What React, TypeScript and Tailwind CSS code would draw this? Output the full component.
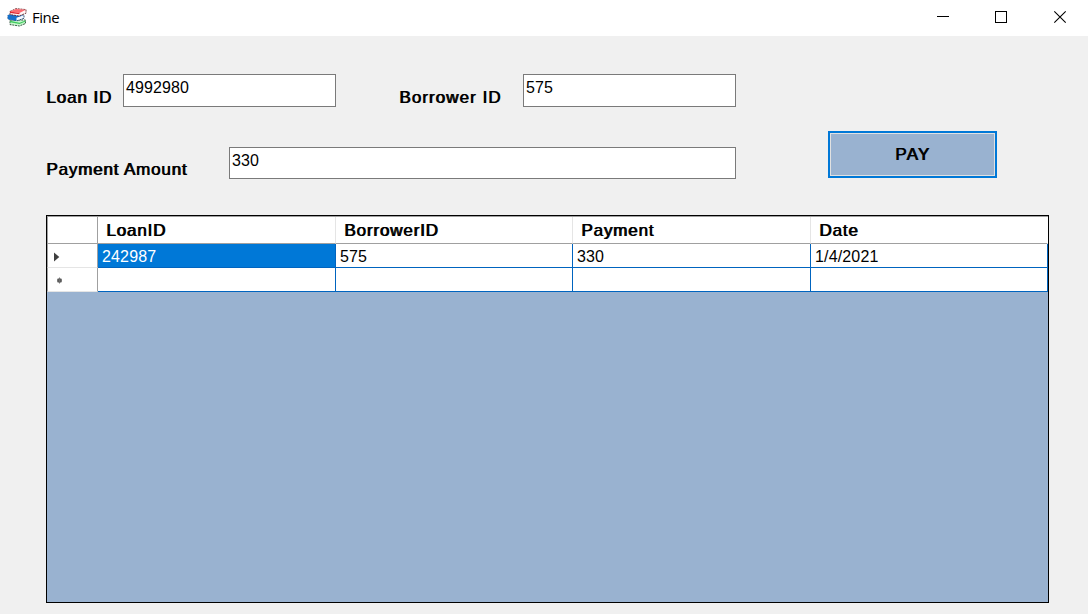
import type { ReactNode } from "react";

const strong = "text-[17px] [text-shadow:0.9px_0_0_#000] whitespace-nowrap";

function BooksIcon() {
  return (
    <svg width="20" height="19" viewBox="0 0 20 19" className="block shrink-0">
      <path d="M3 12 H18.5 V15.5 L12.5 18 L3 16.6Z" fill="#c9f7cf" stroke="#123b22" strokeWidth="0.8" strokeDasharray="2 0.8" />
      <path d="M3 12.8 L12.5 14.8 L18.5 12.5 V13.5 L12.5 16 L3 14.2Z" fill="#3fcb5c" />
      <path d="M1 7.5 L5 6 L17 7 V10.3 L10 12.8 L1 11Z" fill="#f2f9ff" stroke="#0d335c" strokeWidth="0.8" strokeDasharray="2 0.8" />
      <path d="M0.6 7.3 L5 6 L16 7.5 L9.5 9.8 V12.8 L1 11.2Z" fill="#1470cc" />
      <path d="M3 3.5 L9 0.6 L19 1.6 V5.2 L12 8 L3 6.5Z" fill="#fff7f6" stroke="#5a1418" strokeWidth="0.8" strokeDasharray="2 0.8" />
      <path d="M3 3.5 L9 0.9 L18.8 1.8 L12.5 5Z" fill="#fb6a70" />
      <path d="M3 3.5 L12.5 5 V6.3 L3 5Z" fill="#de2630" />
    </svg>
  );
}

function TextBox({ value, className }: { value: string; className: string }) {
  return (
    <div className={`shrink-0 border border-[#7a7a7a] bg-white pl-[2px] pt-[4px] text-[16px] leading-[18px] tracking-[0.1px] ${className}`}>
      {value}
    </div>
  );
}

function HeaderCell({ children, last }: { children: ReactNode; last?: boolean }) {
  return (
    <div className={`border-r border-b border-b-[#a0a0a0] pl-[8px] pt-[5px] leading-[18px] ${last ? "border-r-white" : "border-r-[#e5e5e5]"} ${strong}`}>
      {children}
    </div>
  );
}

function Cell({ children, selected }: { children?: ReactNode; selected?: boolean }) {
  return (
    <div className={`border-r border-b border-[#0064bf] pl-[4px] pt-[4px] leading-[18px] tracking-[0.15px] ${selected ? "bg-[#0078d7] text-white" : "bg-white"}`}>
      {children}
    </div>
  );
}

export default function App() {
  return (
    <div className="flex h-[614px] w-[1088px] flex-col overflow-hidden bg-[#f0f0f0] font-['Liberation_Sans',sans-serif] text-[16px] text-black">
      <header className="flex h-[36px] shrink-0 items-center bg-white pl-[7px]">
        <div className="flex items-center pb-[2px]">
          <BooksIcon />
          <span className="ml-[5px] font-['Open_Sans',sans-serif] text-[15px] leading-[20px] tracking-[-0.5px]">Fine</span>
        </div>
        <div className="ml-auto flex">
          <svg width="151" height="36" viewBox="0 0 151 36" fill="none" stroke="#000" strokeWidth="1">
            <path d="M0 16.5H12" shapeRendering="crispEdges" />
            <rect x="58.5" y="11.5" width="11" height="11" shapeRendering="crispEdges" />
            <path d="M117.3 11.3L128.7 22.7M128.7 11.3L117.3 22.7" strokeWidth="1.1" />
          </svg>
        </div>
      </header>

      <main className="flex flex-1 flex-col pl-[46px]">
        <section className="flex h-[179px] shrink-0">
          <div className="flex w-[690px] flex-col pt-[38px]">
            <div className="flex h-[73px] items-start">
              <label className={`w-[77px] pt-[15px] leading-[18px] tracking-[0.9px] ${strong}`}>Loan ID</label>
              <TextBox value="4992980" className="h-[33px] w-[213px]" />
              <label className={`ml-[63px] w-[124px] pt-[15px] leading-[18px] tracking-[1.05px] ${strong}`}>Borrower ID</label>
              <TextBox value="575" className="h-[33px] w-[213px]" />
            </div>
            <div className="flex items-start">
              <label className={`w-[183px] pt-[14px] leading-[18px] tracking-[0.83px] ${strong}`}>Payment Amount</label>
              <TextBox value="330" className="h-[32px] w-[507px]" />
            </div>
          </div>
          <button className={`ml-[92px] mt-[95px] flex h-[47px] w-[169px] items-center justify-center border-2 border-[#0078d7] bg-[#99b2d0] tracking-[1.2px] outline outline-1 -outline-offset-3 outline-[#e1e1e1] ${strong}`}>
            PAY
          </button>
        </section>

        <section className="h-[388px] w-[1003px] border border-black bg-[#99b2d0]">
          <div className="grid grid-cols-[51px_238px_237px_238px_237px] grid-rows-[27px_24px_24px] border-t border-t-[#a0a0a0]">
            <div className="border-r border-b border-l border-[#a0a0a0] bg-white" />
            <div className="col-span-4 grid grid-cols-[238px_237px_238px_237px] bg-white tracking-[0.85px]">
              <HeaderCell>LoanID</HeaderCell>
              <HeaderCell>BorrowerID</HeaderCell>
              <HeaderCell>Payment</HeaderCell>
              <HeaderCell last>Date</HeaderCell>
            </div>
            <div className="flex items-center border-r border-b border-l border-[#a0a0a0] border-b-[#e5e5e5] bg-white pl-[6px] pt-[2px]">
              <svg width="6" height="10" viewBox="0 0 6 10"><path d="M0 0.5L5.3 5L0 9.5Z" fill="#404040" /></svg>
            </div>
            <Cell selected>242987</Cell>
            <Cell>575</Cell>
            <Cell>330</Cell>
            <Cell>1/4/2021</Cell>
            <div className="flex items-center border-r border-b border-l border-[#a0a0a0] border-b-[#e5e5e5] bg-white pl-[8px] pt-[2px]">
              <svg width="7" height="7" viewBox="0 0 7 7" stroke="#707070"><circle cx="3.5" cy="3.5" r="2.2" fill="#404040" stroke="none" /><path d="M3.5 0.5V6.5M1 2L6 5M6 2L1 5" strokeWidth="0.9" /></svg>
            </div>
            <Cell /><Cell /><Cell /><Cell />
          </div>
        </section>
      </main>
    </div>
  );
}
